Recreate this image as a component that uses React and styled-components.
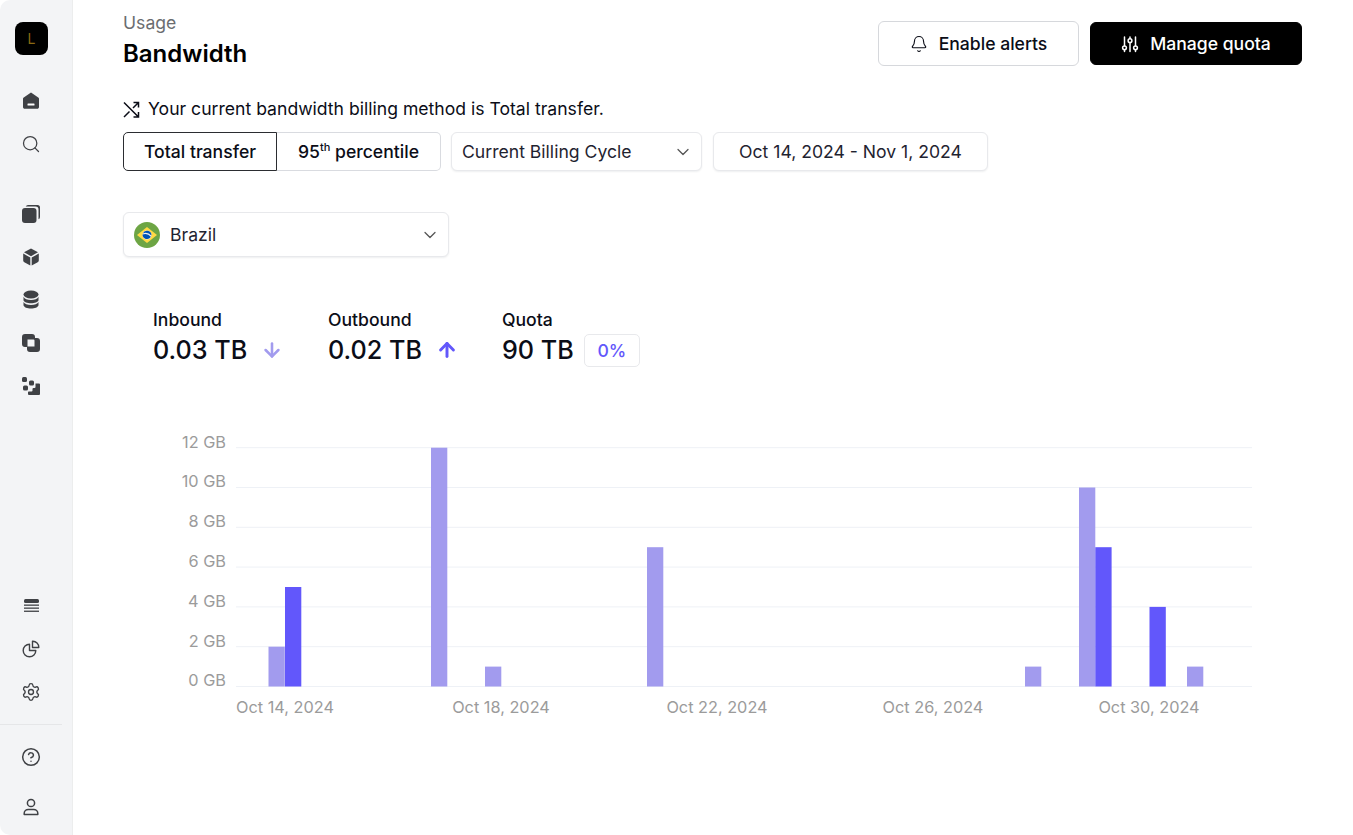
import styled, { createGlobalStyle } from "styled-components";
import {
  ArrowDown,
  ArrowUp,
  Bell,
  ChevronDown,
  CircleHelp,
  Search,
  Settings,
} from "lucide-react";

const GlobalStyle = createGlobalStyle`
  html, body {
    margin: 0;
    background: #fff;
  }
  body {
    font-family: Inter, "Liberation Sans", sans-serif;
    color: #0b0d17;
  }
  * {
    box-sizing: border-box;
  }
`;

const Page = styled.div`
  display: flex;
  width: 1353px;
  height: 835px;
  overflow: hidden;
`;

const Sidebar = styled.aside`
  display: flex;
  flex-direction: column;
  flex: 0 0 73px;
  padding: 22px 0 3px;
  background: #f3f4f6;
  border-right: 1px solid #eceded;
  border-radius: 10px 0 0 10px;
`;

const Logo = styled.div`
  display: flex;
  align-items: center;
  justify-content: center;
  width: 33px;
  height: 33px;
  margin: 0 0 24px 15px;
  border-radius: 8px;
  background: #000;
  color: #8a6a14;
  font-size: 14px;
`;

const NavGroup = styled.div`
  display: flex;
  flex-direction: column;
  margin-bottom: ${(p) => p.$mb || 0}px;
  margin-top: ${(p) => (p.$push ? "auto" : "0")};
`;

const NavItem = styled.div`
  display: flex;
  align-items: center;
  justify-content: center;
  width: 62px;
  height: ${(p) => p.$h || 43}px;
  color: #3f4145;
`;

const Divider = styled.hr`
  width: 62px;
  margin: 11px 0 7px;
  border: 0;
  border-top: 1px solid #e5e6e8;
`;

const Main = styled.main`
  flex: 1;
  padding: 12px 51px 0 50px;
`;

const Header = styled.header`
  display: flex;
  align-items: flex-start;
  justify-content: space-between;
`;

const Eyebrow = styled.div`
  font-size: 17.6px;
  line-height: 22px;
  color: #6b6d70;
`;

const Title = styled.h1`
  margin: 5px 0 0;
  font-size: 24px;
  line-height: 30px;
  font-weight: 600;
  color: #000;
`;

const Actions = styled.div`
  display: flex;
  align-items: center;
  gap: 11px;
  margin-top: 9px;
`;

const ActionButton = styled.button`
  display: flex;
  align-items: center;
  justify-content: center;
  gap: 11px;
  width: ${(p) => p.$w}px;
  height: ${(p) => (p.$primary ? 43 : 45)}px;
  border: 1px solid ${(p) => (p.$primary ? "#000" : "#d6d8dc")};
  border-radius: 6px;
  background: ${(p) => (p.$primary ? "#000" : "#fff")};
  color: ${(p) => (p.$primary ? "#fff" : "#0b0d17")};
  font: 500 17.6px Inter, sans-serif;
`;

const Notice = styled.div`
  display: flex;
  align-items: center;
  gap: 8px;
  margin-top: 29px;
  font-size: 17.6px;
  line-height: 22px;
  color: #0b0d17;
`;

const Controls = styled.div`
  display: flex;
  align-items: center;
  gap: 10px;
  margin-top: 12px;
`;

const Segmented = styled.div`
  display: flex;
  height: 39px;
`;

const Segment = styled.button`
  width: ${(p) => p.$w}px;
  padding: 0;
  border: 1px solid ${(p) => (p.$active ? "#2b2d31" : "#d9dbe0")};
  border-left-width: ${(p) => (p.$active ? 1 : 0)}px;
  border-radius: ${(p) => (p.$active ? "5px 0 0 5px" : "0 5px 5px 0")};
  background: #fff;
  color: #0b0d17;
  font: 500 17.6px Inter, sans-serif;

  sup {
    font-size: 11px;
    line-height: 0;
  }
`;

const Select = styled.div`
  display: flex;
  align-items: center;
  justify-content: ${(p) => (p.$center ? "center" : "space-between")};
  width: ${(p) => p.$w}px;
  height: ${(p) => p.$h || 39}px;
  padding: ${(p) => (p.$center ? "0" : "0 8px 0 10px")};
  margin-left: ${(p) => p.$ml || 0}px;
  border: 1px solid #e8e9ec;
  border-radius: 6px;
  background: #fff;
  box-shadow: 0 1px 2px rgba(16, 24, 40, 0.07);
  font-size: 17.6px;
  color: #1f2330;
`;

const CountryWrap = styled.div`
  margin-top: 41px;
`;

const Country = styled.span`
  display: flex;
  align-items: center;
  gap: 10px;
`;

const Stats = styled.div`
  display: flex;
  margin: 53px 0 0 30px;
`;

const Stat = styled.div`
  width: ${(p) => p.$w}px;
`;

const StatLabel = styled.div`
  font-size: 17.6px;
  line-height: 20px;
  font-weight: 500;
`;

const StatValue = styled.div`
  display: flex;
  align-items: center;
  gap: ${(p) => p.$gap}px;
  height: 36px;
  margin-top: 2px;
  font-size: 25.2px;
  font-weight: 500;
`;

const Badge = styled.span`
  display: flex;
  align-items: center;
  justify-content: center;
  width: 56px;
  height: 33px;
  border: 1px solid #e8e9ec;
  border-radius: 5px;
  color: #6257fb;
  font-size: 17.6px;
  font-weight: 500;
`;

const Chart = styled.svg`
  display: block;
  margin: 62px 0 0 47px;

  text {
    font-family: Inter, sans-serif;
    font-size: 16.3px;
    fill: #9b9b9b;
  }
`;

const HomeIcon = () => (
  <svg width="18" height="18" viewBox="0 0 18 18">
    <path
      d="M9 .6 16.6 5.8c.3.2.4.5.4.9v8.2c0 1-.8 1.8-1.8 1.8H2.8c-1 0-1.8-.8-1.8-1.8V6.700c0-.4.1-.7.4-.9z"
      fill="currentColor"
    />
    <rect x="5.500" y="11.500" width="7" height="2" rx=".5" fill="#fff" />
  </svg>
);

const StackIcon = () => (
  <svg width="20" height="20" viewBox="0 0 20 20" fill="currentColor">
    <path d="M7 1h9.500A2.500 2.500 0 0 1 19 3.500V13a2.500 2.500 0 0 1-1.500 2.300V5.500a3 3 0 0 0-3-3H4.700A2.500 2.500 0 0 1 7 1z" />
    <rect x="1" y="4" width="14.500" height="15" rx="3" />
  </svg>
);

const CubeIcon = () => (
  <svg width="18" height="18" viewBox="0 0 18 18" fill="currentColor">
    <path d="M9 .5 16 4.300 9 8.200 2 4.300z" />
    <path d="M1.200 5.600 8.300 9.500v8L2.300 14.200a2 2 0 0 1-1.100-1.800z" />
    <path d="M16.800 5.600 9.700 9.500v8l6-3.300a2 2 0 0 0 1.100-1.800z" />
  </svg>
);

const DatabaseIcon = () => (
  <svg width="18" height="20" viewBox="0 0 18 20" fill="currentColor">
    <ellipse cx="9" cy="4.500" rx="7.500" ry="4" />
    <path d="M1.500 6.800C2.500 9 5.500 10 9 10s6.500-1 7.500-3.200v3.400C16 12 12.800 13.200 9 13.200S2 12 1.500 10.200z" />
    <path d="M1.500 12C2.500 14 5.500 15 9 15s6.500-1 7.500-3v3.200c-.5 2-3.700 3.300-7.500 3.300s-7-1.300-7.500-3.300z" />
  </svg>
);

const OverlapIcon = () => (
  <svg width="20" height="20" viewBox="0 0 20 20" fill="currentColor">
    <path
      fillRule="evenodd"
      d="M4 1h7a3 3 0 0 1 3 3v1h2a3 3 0 0 1 3 3v8a3 3 0 0 1-3 3H9a3 3 0 0 1-3-3v-2H4a3 3 0 0 1-3-3V4a3 3 0 0 1 3-3zm2.500 5.500v7h7v-6a1 1 0 0 0-1-1z"
    />
  </svg>
);

const BlocksIcon = () => (
  <svg width="20" height="20" viewBox="0 0 20 20" fill="currentColor">
    <rect x="1" y="1" width="5" height="5" rx="1.500" />
    <rect x="8" y="4.500" width="5" height="5" rx="1.500" />
    <rect x="2" y="9.500" width="5" height="5" rx="1.500" />
    <path d="M14.500 7.500H18a1 1 0 0 1 1 1V18a1 1 0 0 1-1 1H8a1 1 0 0 1-1-1v-1.500c0-.6.4-1 1-1h2.500a1 1 0 0 0 1-1v-1.500a1 1 0 0 1 1-1h1a1 1 0 0 0 1-1z" />
  </svg>
);

const ListIcon = () => (
  <svg width="17" height="16" viewBox="0 0 17 16" fill="currentColor">
    <rect x="1" y="1" width="15" height="4" rx="1.500" />
    <rect x="1" y="6.500" width="15" height="1.300" />
    <rect x="1" y="9.500" width="15" height="1.300" />
    <rect x="1" y="12.600" width="15" height="1.300" />
  </svg>
);

const PieIcon = () => (
  <svg width="18" height="18" viewBox="0 0 18 18" fill="none" stroke="currentColor" strokeWidth="1.400" strokeLinejoin="round">
    <path d="M7.500 4.200a6.300 6.300 0 1 0 6.300 6.300H7.500z" />
    <path d="M10.500 1.200a6 6 0 0 1 6.300 6.300h-6.300z" />
  </svg>
);

const UserIcon = () => (
  <svg width="18" height="18" viewBox="0 0 18 18" fill="none" stroke="currentColor" strokeWidth="1.500">
    <circle cx="9" cy="5" r="3.600" />
    <path d="M2.200 16.500v-1.200c0-2.300 1.900-3.800 4.100-3.800h5.400c2.200 0 4.100 1.500 4.100 3.800v1.200z" strokeLinejoin="round" />
  </svg>
);

const SlidersIcon = () => (
  <svg width="18" height="18" viewBox="0 0 18 18" fill="none" stroke="currentColor" strokeWidth="1.500" strokeLinecap="round">
    <path d="M3.500 2v8.500M3.500 15v1.500M9 2v1.500M9 8v8.500M14.500 2v8.500M14.500 15v1.500" />
    <circle cx="3.500" cy="12.800" r="1.900" />
    <circle cx="9" cy="5.700" r="1.900" />
    <circle cx="14.500" cy="12.800" r="1.900" />
  </svg>
);

const ShuffleIcon = () => (
  <svg width="17" height="17" viewBox="0 0 17 17" fill="none" stroke="currentColor" strokeWidth="1.500">
    <path d="M1 1.500 15.500 16M1 16l5.500-5.500M10 7l5.500-5.500M10.500 1.500h5v5M10.500 16h5v-5" />
  </svg>
);

const BrazilFlag = () => (
  <svg width="26" height="26" viewBox="0 0 26 26">
    <circle cx="13" cy="13" r="13" fill="#6da544" />
    <path d="M13 5.100 23 13 13 20.900 3 13z" fill="#ffda44" />
    <circle cx="13" cy="13" r="4.500" fill="#f0f0f0" />
    <path d="M8.800 11.400a8 8 0 0 1 8.600 2.200 4.500 4.500 0 0 0-8.600-2.200z" fill="#0052b4" />
    <path d="M8.500 12.500a4.500 4.500 0 0 0 8.400 2.300 7.500 7.500 0 0 0-8.400-2.300z" fill="#0052b4" />
  </svg>
);

const CHART_LEFT = 66;
const CHART_RIGHT = 1082;
const BASE_Y = 256.5;
const GB_PX = 19.9;
const BAR_W = 16.3;

const yTicks = [0, 2, 4, 6, 8, 10, 12];
const xTicks = [
  { x: 115, label: "Oct 14, 2024" },
  { x: 331, label: "Oct 18, 2024" },
  { x: 547, label: "Oct 22, 2024" },
  { x: 763, label: "Oct 26, 2024" },
  { x: 979, label: "Oct 30, 2024" },
];
const bars = [
  { x: 98.500, gb: 2, color: "#a29bee" },
  { x: 115, gb: 5, color: "#6257fb" },
  { x: 261, gb: 12, color: "#a29bee" },
  { x: 315, gb: 1, color: "#a29bee" },
  { x: 477, gb: 7, color: "#a29bee" },
  { x: 855, gb: 1, color: "#a29bee" },
  { x: 909, gb: 10, color: "#a29bee" },
  { x: 925.300, gb: 7, color: "#6257fb" },
  { x: 979.500, gb: 4, color: "#6257fb" },
  { x: 1017, gb: 1, color: "#a29bee" },
];

const UsageChart = () => (
  <Chart width="1090" height="295" viewBox="0 0 1090 295">
    {yTicks.map((gb) => {
      const y = BASE_Y - gb * GB_PX;
      return (
        <g key={gb}>
          <line x1={CHART_LEFT} x2={CHART_RIGHT} y1={y} y2={y} stroke="#eef1f6" />
          <text x="56" y={y} dy="-4.5" textAnchor="end" dominantBaseline="middle">
            {gb} GB
          </text>
        </g>
      );
    })}
    {bars.map((b) => (
      <rect
        key={b.x}
        x={b.x}
        y={BASE_Y - b.gb * GB_PX}
        width={BAR_W}
        height={b.gb * GB_PX}
        fill={b.color}
      />
    ))}
    {xTicks.map((t) => (
      <text key={t.label} x={t.x} y="283" textAnchor="middle">
        {t.label}
      </text>
    ))}
  </Chart>
);

const App = () => {
  return (
    <Page>
      <GlobalStyle />
      <Sidebar>
        <Logo>L</Logo>
        <NavGroup $mb={27}>
          <NavItem><HomeIcon /></NavItem>
          <NavItem><Search size={20} strokeWidth={1.500} /></NavItem>
        </NavGroup>
        <NavGroup>
          <NavItem><StackIcon /></NavItem>
          <NavItem><CubeIcon /></NavItem>
          <NavItem><DatabaseIcon /></NavItem>
          <NavItem><OverlapIcon /></NavItem>
          <NavItem><BlocksIcon /></NavItem>
        </NavGroup>
        <NavGroup $push>
          <NavItem><ListIcon /></NavItem>
          <NavItem><PieIcon /></NavItem>
          <NavItem><Settings size={20} strokeWidth={1.600} /></NavItem>
        </NavGroup>
        <Divider />
        <NavGroup>
          <NavItem $h={50}><CircleHelp size={20} strokeWidth={1.800} /></NavItem>
          <NavItem $h={50}><UserIcon /></NavItem>
        </NavGroup>
      </Sidebar>
      <Main>
        <Header>
          <div>
            <Eyebrow>Usage</Eyebrow>
            <Title>Bandwidth</Title>
          </div>
          <Actions>
            <ActionButton $w={201}>
              <Bell size={18} strokeWidth={1.500} />
              Enable alerts
            </ActionButton>
            <ActionButton $w={212} $primary>
              <SlidersIcon />
              Manage quota
            </ActionButton>
          </Actions>
        </Header>
        <Notice>
          <ShuffleIcon />
          Your current bandwidth billing method is Total transfer.
        </Notice>
        <Controls>
          <Segmented>
            <Segment $w={154} $active>Total transfer</Segment>
            <Segment $w={164}>95<sup>th</sup> percentile</Segment>
          </Segmented>
          <Select $w={251}>
            Current Billing Cycle
            <ChevronDown size={20} strokeWidth={1.500} color="#555" />
          </Select>
          <Select $w={275} $ml={1} $center>Oct 14, 2024 - Nov 1, 2024</Select>
        </Controls>
        <CountryWrap>
          <Select $w={326} $h={45}>
            <Country>
              <BrazilFlag />
              Brazil
            </Country>
            <ChevronDown size={20} strokeWidth={1.500} color="#555" />
          </Select>
        </CountryWrap>
        <Stats>
          <Stat $w={175}>
            <StatLabel>Inbound</StatLabel>
            <StatValue $gap={14}>
              0.03 TB
              <ArrowDown size={22} strokeWidth={2.800} color="#a29bee" />
            </StatValue>
          </Stat>
          <Stat $w={174}>
            <StatLabel>Outbound</StatLabel>
            <StatValue $gap={14}>
              0.02 TB
              <ArrowUp size={22} strokeWidth={3.200} color="#6257fb" />
            </StatValue>
          </Stat>
          <Stat>
            <StatLabel>Quota</StatLabel>
            <StatValue $gap={10}>
              90 TB
              <Badge>0%</Badge>
            </StatValue>
          </Stat>
        </Stats>
        <UsageChart />
      </Main>
    </Page>
  );
};

export default App;
